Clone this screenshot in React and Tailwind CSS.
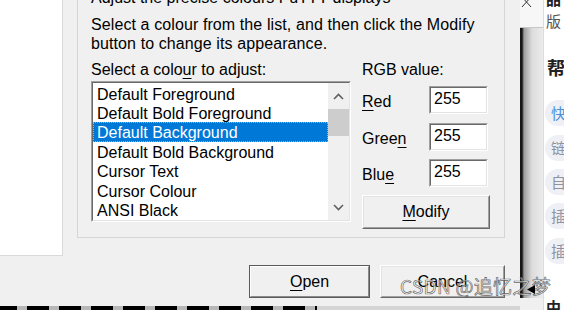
import React from "react";

function Sunken({ className, children }) {
  return (
    <div className={`border border-t-[#a0a0a0] border-l-[#a0a0a0] border-b-white border-r-white ${className}`}>
      <div className="h-full border border-t-[#696969] border-l-[#696969] border-b-[#e3e3e3] border-r-[#e3e3e3] bg-white">
        {children}
      </div>
    </div>
  );
}

function Raised({ className, children }) {
  return (
    <div className={`border border-t-white border-l-white border-b-[#696969] border-r-[#696969] ${className}`}>
      <div className="h-full border border-t-[#e3e3e3] border-l-[#e3e3e3] border-b-[#a0a0a0] border-r-[#a0a0a0] bg-[#f0f0f0] flex items-center justify-center">
        {children}
      </div>
    </div>
  );
}

const U = ({ children }) => (
  <span className="underline decoration-1 underline-offset-[3px]">{children}</span>
);

const items = [
  { t: "Default Foreground", h: "h-[19px]" },
  { t: "Default Bold Foreground", h: "h-[19px]" },
  { t: "Default Background", h: "h-[20px]", sel: true },
  { t: "Default Bold Background", h: "h-[19px]" },
  { t: "Cursor Text", h: "h-[20px]" },
  { t: "Cursor Colour", h: "h-[19px]" },
  { t: "ANSI Black", h: "h-[20px]" },
];

function Chevron({ up }) {
  return (
    <svg width="11" height="7" viewBox="0 0 11 7">
      <polyline
        points={up ? "1,6 5.5,1.5 10,6" : "1,1 5.5,5.5 10,1"}
        fill="none"
        stroke="#606060"
        strokeWidth="1.6"
      />
    </svg>
  );
}

export default function App() {
  return (
    <div className="w-[564px] h-[310px] overflow-hidden relative flex bg-white text-black text-[16px] font-['Liberation_Sans',Arial,sans-serif]">
      {/* Dialog column */}
      <div className="w-[520px] shrink-0 flex flex-col">
        <div className="h-[306px] bg-[#f0f0f0] flex items-start">
          <div className="w-[63px] h-[256px] bg-white border-r border-b border-[#dadada] shrink-0" />
          <div className="ml-[14px] w-[428px] flex flex-col shrink-0">
            {/* group box */}
            <div className="-mt-[12px] h-[250px] border border-[#d5d5d5] pl-[13px] pr-[14px] flex flex-col">
              <div className="-mt-[1px] leading-[20px] h-[20px]">Adjust the precise colours PuTTY displays</div>
              <div className="mt-[7px] leading-[19px] tracking-[0.1px]">
                <div>Select a colour from the list, and then click the Modify</div>
                <div>button to change its appearance.</div>
              </div>
              <div className="mt-[7px] flex gap-[11px]">
                <div className="w-[260px] flex flex-col">
                  <div className="leading-[20px] h-[20px]">
                    Select a colo<U>u</U>r to adjust:
                  </div>
                  <Sunken className="mt-[1px] h-[141px]">
                    <div className="flex h-full">
                      <div className="w-[235px] pt-[1px] flex flex-col">
                        {items.map((it) =>
                          it.sel ? (
                            <div
                              key={it.t}
                              className={`${it.h} leading-[18px] pt-[2px] bg-[#0078d7] text-white border border-dotted border-[#f0a050] pl-[3px] flex items-center`}
                            >
                              {it.t}
                            </div>
                          ) : (
                            <div
                              key={it.t}
                              className={`${it.h} leading-[18px] pt-[2px] border border-transparent pl-[3px] flex items-center`}
                            >
                              {it.t}
                            </div>
                          )
                        )}
                      </div>
                      <div className="flex-1 bg-[#f0f0f0] flex flex-col">
                        <div className="h-[26px] flex items-center justify-center">
                          <Chevron up />
                        </div>
                        <div className="h-[27px] bg-[#cdcdcd]" />
                        <div className="flex-1" />
                        <div className="h-[26px] flex items-center justify-center">
                          <Chevron />
                        </div>
                      </div>
                    </div>
                  </Sunken>
                </div>
                <div className="w-[128px] flex flex-col">
                  <div className="leading-[20px] h-[20px]">RGB value:</div>
                  {[
                    { l: <><U>R</U>ed</>, mt: "mt-[6px]" },
                    { l: <>Gree<U>n</U></>, mt: "mt-[9px]" },
                    { l: <>Blu<U>e</U></>, mt: "mt-[8px]" },
                  ].map((r, i) => (
                    <div key={i} className={`${r.mt} flex items-center`}>
                      <div className="w-[67px] pt-[4px] leading-[20px]">{r.l}</div>
                      <Sunken className="w-[59px] h-[28px]">
                        <div className="pl-[3px] leading-[22px]">255</div>
                      </Sunken>
                    </div>
                  ))}
                  <Raised className="mt-[8px] h-[34px]">
                    <span>
                      <U>M</U>odify
                    </span>
                  </Raised>
                </div>
              </div>
            </div>
            {/* buttons */}
            <div className="mt-[27px] flex justify-end gap-[10px]">
              <div className="w-[121px] h-[33px] border border-[#5a5a5a]">
                <div className="h-full border border-t-white border-l-white border-b-[#8a8a8a] border-r-[#8a8a8a] bg-[#f0f0f0] flex items-center justify-center">
                  <span>
                    <U>O</U>pen
                  </span>
                </div>
              </div>
              <Raised className="w-[125px] h-[33px]">
                <span>Cancel</span>
              </Raised>
            </div>
          </div>
        </div>
        {/* bottom strip */}
        <div className="h-[4px] flex">
          <div className="w-[317px] bg-black flex pl-[17px] gap-[22px]">
            {Array.from({ length: 10 }).map((_, i) => (
              <div key={i} className="w-[10px] h-full bg-[#b8b8b8]" />
            ))}
          </div>
          <div className="flex-1 bg-[#d4d4d4]" />
        </div>
      </div>

      {/* shadow / window column */}
      <div className="w-[23px] shrink-0 flex flex-col">
        <div className="h-[28px] bg-[#f7f7f7] border-b border-[#c8c8c8] pl-[1px]">
          <svg width="12" height="8" viewBox="0 0 12 8">
            <path d="M1 -3 L10 7 M10 -3 L1 7" stroke="#333" strokeWidth="1" fill="none" />
          </svg>
        </div>
        <div className="h-[270px] bg-[linear-gradient(to_right,#151515_0px,#151515_2px,#9c9c9c_4px,#dcdcdc_12px,#ececec_23px)]" />
        <div className="flex-1 bg-[#f0f0f0]" />
      </div>

      {/* web page column */}
      <div className="flex-1 border-l border-[#dcdcdc] bg-white flex flex-col overflow-hidden font-['Noto_Sans_CJK_SC',sans-serif]">
        <div className="-mt-[10px] h-[18px] leading-[18px] pl-[2px] text-[15px] font-bold text-[#222]">品</div>
        <div className="mt-[5px] h-[16px] leading-[16px] pl-[2px] text-[15px] text-[#555]">版</div>
        <div className="mt-[28px] h-[20px] leading-[20px] pl-[3px] text-[18px] font-bold text-[#222]">帮</div>
        {[
          { c: "快", col: "text-[#4a8fe0]", mt: "mt-[23px]" },
          { c: "链", col: "text-[#8d93a0]", mt: "mt-[9px]" },
          { c: "自", col: "text-[#8d93a0]", mt: "mt-[8px]" },
          { c: "插", col: "text-[#8d93a0]", mt: "mt-[8px]" },
          { c: "插", col: "text-[#8d93a0]", mt: "mt-[9px]" },
        ].map((p, i) => (
          <div
            key={i}
            className={`${p.mt} ml-[1px] h-[26px] leading-[26px] rounded-l-[13px] bg-[#eef0f5] pl-[6px] text-[15px] ${p.col}`}
          >
            {p.c}
          </div>
        ))}
        <div className="mt-[34px] h-[18px] leading-[18px] pl-[2px] text-[15px] font-bold text-[#222]">中</div>
      </div>

      {/* watermark overlay */}
      <div className="absolute left-[400px] top-[274px] flex items-center pointer-events-none">
        <span className="text-[19px] leading-[24px] tracking-[0.3px] font-['Noto_Sans_CJK_SC',sans-serif] text-[rgba(255,255,255,0.6)] [-webkit-text-stroke:0.7px_rgba(80,80,80,0.85)]">
          CSDN @追忆之梦
        </span>
      </div>
      <svg className="absolute left-[527px] top-[285px]" width="9" height="9" viewBox="0 0 9 9">
        <polygon points="0,4.5 8,0 8,9" fill="#000" />
      </svg>
    </div>
  );
}
